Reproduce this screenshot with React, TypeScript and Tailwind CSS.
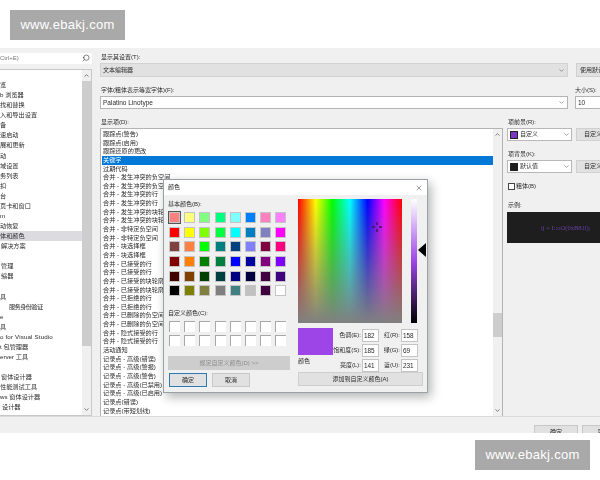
import { ChevronDown, ChevronUp, Search, X } from 'lucide-react'

const cjk = "font-['Liberation_Sans','Noto_Sans_CJK_SC',sans-serif]"

const treeRows = [
  { t: '览', c: '' },
  { t: 'b 浏览器', c: '' },
  { t: '找和替换', c: '' },
  { t: '入和导出设置', c: '' },
  { t: '备', c: '' },
  { t: '速启动', c: '' },
  { t: '展和更新', c: '' },
  { t: '动', c: '' },
  { t: '域设置', c: '' },
  { t: '务列表', c: '' },
  { t: '扣', c: '' },
  { t: '台', c: '' },
  { t: '页卡和窗口', c: '' },
  { t: 'm', c: '' },
  { t: '动恢复', c: '' },
  { t: '体和颜色', c: 'bg-[#dcdce0]' },
  { t: '解决方案', c: 'pl-[1px]' },
  { t: '', c: '' },
  { t: '管理', c: 'pl-[1px]' },
  { t: '缩器', c: 'pl-[1px]' },
  { t: '', c: '' },
  { t: '具', c: '' },
  { t: '服务身份验证', c: 'pl-[9px] tracking-[-0.6px]' },
  { t: 'e', c: '' },
  { t: '具', c: '' },
  { t: 'o for Visual Studio', c: 'tracking-[0.15px]' },
  { t: 't 包管理器', c: '' },
  { t: 'erver 工具', c: '' },
  { t: '', c: '' },
  { t: '窗体设计器', c: 'pl-[1px]' },
  { t: '性能测试工具', c: '' },
  { t: 'ws 窗体设计器', c: '' },
  { t: '设计器', c: 'pl-[2px]' },
]

const itemRows = [
  '跟踪点(警告)',
  '跟踪点(启用)',
  '跟踪还原的更改',
  '关键字',
  '过期代码',
  '合并 - 发生冲突的负空间',
  '合并 - 发生冲突的负空间',
  '合并 - 发生冲突的行',
  '合并 - 发生冲突的行',
  '合并 - 发生冲突的块轮廓',
  '合并 - 发生冲突的块轮廓',
  '合并 - 非特定负空间',
  '合并 - 非特定负空间',
  '合并 - 块选择框',
  '合并 - 块选择框',
  '合并 - 已接受的行',
  '合并 - 已接受的行',
  '合并 - 已接受的块轮廓',
  '合并 - 已接受的块轮廓',
  '合并 - 已拒绝的行',
  '合并 - 已拒绝的行',
  '合并 - 已删除的负空间',
  '合并 - 已删除的负空间',
  '合并 - 隐式接受的行',
  '合并 - 隐式接受的行',
  '活动通知',
  '记录点 - 高级(错误)',
  '记录点 - 高级(警报)',
  '记录点 - 高级(警告)',
  '记录点 - 高级(已禁用)',
  '记录点 - 高级(已启用)',
  '记录点(错误)',
  '记录点(带短划线)',
]

const basicColors = [
  ['#ff8080', '#ffff80', '#80ff80', '#00ff80', '#80ffff', '#0080ff', '#ff80c0', '#ff80ff'],
  ['#ff0000', '#ffff00', '#80ff00', '#00ff40', '#00ffff', '#0080c0', '#8080c0', '#ff00ff'],
  ['#804040', '#ff8040', '#00ff00', '#008080', '#004080', '#8080ff', '#800040', '#ff0080'],
  ['#800000', '#ff8000', '#008000', '#008040', '#0000ff', '#0000a0', '#800080', '#8000ff'],
  ['#400000', '#804000', '#004000', '#004040', '#000080', '#000040', '#400040', '#400080'],
  ['#000000', '#808000', '#808040', '#808080', '#408080', '#c0c0c0', '#400040', '#ffffff'],
]

function Label({ children, className = '' }: { children: string; className?: string }) {
  return <div className={`h-[10px] text-[6px] leading-[10px] text-[#2a2a2a] whitespace-nowrap ${className}`}>{children}</div>
}

function Scrollbar({ thumb }: { thumb: string }) {
  return (
    <div className="w-[9px] shrink-0 flex flex-col bg-[#f0f0f0] text-[#555]">
      <div className="h-[11px] flex items-center justify-center shrink-0">
        <ChevronUp size={7} strokeWidth={2.5} />
      </div>
      <div className="flex-1 flex flex-col">
        <div className={thumb} />
        <div className="flex-1" />
      </div>
      <div className="h-[11px] flex items-center justify-center shrink-0">
        <ChevronDown size={7} strokeWidth={2.5} />
      </div>
    </div>
  )
}

function ColorField({ label, value, labelWidth }: { label: string; value: string; labelWidth: string }) {
  return (
    <div className="flex items-center h-[15px]">
      <div className={`text-[6px] text-right whitespace-nowrap text-[#2a2a2a] ${labelWidth}`}>{label}</div>
      <div className="w-[17px] h-[13px] ml-[1px] bg-white border border-[#c4c4c4] text-[6.4px] leading-[11px] pl-[1px] text-[#2a2a2a]">
        {value}
      </div>
    </div>
  )
}

function SwatchCombo({ swatch, text }: { swatch: string; text: string }) {
  return (
    <div className="flex mt-[1px] gap-[4px]">
      <div className="w-[65px] h-[13px] shrink-0 bg-white border border-[#b8b8b8] flex items-center pl-[2px] pr-[1px]">
        <div className={`w-[8px] h-[8px] border border-[#222] ${swatch}`} />
        <span className="text-[6px] ml-[2px] text-[#2a2a2a]">{text}</span>
        <ChevronDown size={7} className="ml-auto text-[#666]" />
      </div>
      <div className="w-[40px] h-[13px] shrink-0 bg-[#e1e1e1] border border-[#d0d0d0] text-[6px] leading-[11px] pl-[7px] text-[#2a2a2a] whitespace-nowrap">
        自定义
      </div>
    </div>
  )
}

function ColorDialog() {
  return (
    <div className="absolute left-[163px] top-[179px] w-[265px] h-[214px] bg-[#f0f0f0] border border-[#9aa0a6] shadow-[3px_4px_10px_rgba(0,0,0,0.3)] flex flex-col">
      <div className="h-[15px] bg-white flex items-center justify-between pl-[4px] pr-[4px] shrink-0">
        <span className="text-[6px] text-[#2a2a2a]">颜色</span>
        <X size={8} strokeWidth={1.5} className="text-[#333]" />
      </div>
      <div className="flex gap-[6px] pl-[4px] pt-[4px]">
        {/* Left: basic and custom colours */}
        <div className="w-[124px] shrink-0 flex flex-col">
          <Label>基本颜色(B):</Label>
          <div className="grid grid-cols-[repeat(8,11px)] gap-x-[4.2px] gap-y-[3.7px] pl-[1px] mt-[3px]">
            {basicColors.flat().map((color, i) => (
              <div
                key={i}
                className={`w-[11px] h-[11px] border border-[#c4c4c4] ${i === 0 ? 'outline outline-1 outline-[#555]' : ''}`}
                style={{ background: color }}
              />
            ))}
          </div>
          <Label className="mt-[12px]">自定义颜色(C):</Label>
          <div className="grid grid-cols-[repeat(8,11px)] gap-x-[4.2px] gap-y-[3px] pl-[1px] mt-[3px]">
            {Array.from({ length: 16 }).map((_, i) => (
              <div key={i} className="w-[11px] h-[11px] bg-white border-l border-t border-[#a8a8a8]" />
            ))}
          </div>
          <div className="w-[122px] h-[14px] mt-[10px] bg-[#cdcdcd] text-[6px] leading-[14px] text-center text-[#8e8e8e]">
            规定自定义颜色(D) &gt;&gt;
          </div>
          <div className="flex gap-[5px] mt-[3px] pl-[1px]">
            <div className="w-[38px] h-[14px] bg-[#e1e1e1] border border-[#2f79b5] text-[6px] leading-[12px] text-center text-[#2a2a2a]">
              确定
            </div>
            <div className="w-[38px] h-[14px] bg-[#e1e1e1] border border-[#c8c8c8] text-[6px] leading-[12px] text-center text-[#2a2a2a]">
              取消
            </div>
          </div>
        </div>

        {/* Right: spectrum and values */}
        <div className="flex-1 flex flex-col">
          <div className="flex">
            <div className="relative w-[104px] h-[124px] bg-[linear-gradient(to_bottom,rgba(128,128,128,0),#808080),linear-gradient(to_right,#ff0000,#ffff00_17%,#00ff00_33%,#00ffff_50%,#0000ff_67%,#ff00ff_83%,#ff0000)]">
              <svg className="absolute left-[74px] top-[23px]" width="10" height="10" viewBox="0 0 10 10">
                <path d="M5 0v3M5 7v3M0 5h3M7 5h3" stroke="#3b1a55" strokeWidth="1.4" />
              </svg>
            </div>
            <div className="relative ml-[9px] w-[6px] h-[124px] bg-[linear-gradient(to_bottom,#ffffff,#9e45e7_50%,#000000)]">
              <svg className="absolute left-[7px] top-[44px]" width="8" height="14" viewBox="0 0 8 14">
                <path d="M0 7 8 0v14z" fill="#000" />
              </svg>
            </div>
          </div>
          <div className="flex mt-[5px]">
            <div className="w-[35px] shrink-0">
              <div className="h-[27px] bg-[#9e45e7]" />
              <div className="text-[6px] mt-[2px] text-[#2a2a2a]">颜色</div>
            </div>
            <div className="flex flex-col">
              <ColorField label="色调(E):" value="182" labelWidth="w-[28px]" />
              <ColorField label="饱和度(S):" value="185" labelWidth="w-[28px]" />
              <ColorField label="亮度(L):" value="141" labelWidth="w-[28px]" />
            </div>
            <div className="flex flex-col ml-[1px]">
              <ColorField label="红(R):" value="158" labelWidth="w-[20px]" />
              <ColorField label="绿(G):" value="69" labelWidth="w-[20px]" />
              <ColorField label="蓝(U):" value="231" labelWidth="w-[20px]" />
            </div>
          </div>
          <div className="w-[125px] h-[14px] mt-[-1px] bg-[#e1e1e1] border border-[#cfcfcf] text-[6px] leading-[12px] text-center text-[#2a2a2a]">
            添加到自定义颜色(A)
          </div>
        </div>
      </div>
    </div>
  )
}

export default function App() {
  return (
    <div className={`relative w-[600px] h-[480px] overflow-hidden bg-white ${cjk}`}>
      <div className="blur-[0.3px]">
        <div className="h-[48px]" />
        <div className="h-[385px] overflow-hidden bg-[#f0f0f0]">
          <div className="flex h-[369px] border-b border-[#dcdcdc]">
            {/* Left: options tree */}
            <div className="w-[92px] shrink-0 pt-[5px] flex flex-col">
              <div className="h-[11px] bg-white flex items-center justify-between pr-[2px]">
                <span className="text-[6px] text-[#777] whitespace-nowrap">Ctrl+E)</span>
                <Search size={8} className="text-[#444] -scale-x-100" />
              </div>
              <div className="mt-[5px] h-[348px] bg-white border-r border-b border-t border-[#c8c8c8] flex">
                <div className="flex-1 min-w-0 overflow-hidden pt-[10px]">
                  {treeRows.map((row, i) => (
                    <div key={i} className={`h-[10.08px] text-[6.2px] leading-[10px] text-[#2a2a2a] whitespace-nowrap ${row.c}`}>
                      {row.t}
                    </div>
                  ))}
                </div>
                <Scrollbar thumb="h-[265px] bg-[#cdcdcd]" />
              </div>
            </div>

            {/* Right: settings, items and colours */}
            <div className="w-[500px] shrink-0 ml-[8px] pt-[4px] flex flex-col">
              <div className="flex gap-[8px] shrink-0">
                <div className="w-[468px] shrink-0">
                  <Label className="pl-[1px]">显示其设置(T):</Label>
                  <div className="mt-[1px] h-[14px] bg-[#e1e1e1] border border-[#d2d2d2] flex items-center justify-between pl-[2px] pr-[2px]">
                    <span className="text-[6px] text-[#2a2a2a]">文本编辑器</span>
                    <ChevronDown size={7} className="text-[#666]" />
                  </div>
                </div>
                <div className="w-[30px] shrink-0 pt-[11px]">
                  <div className="h-[14px] bg-[#e1e1e1] border border-[#d0d0d0] text-[6px] leading-[12px] pl-[3px] text-[#2a2a2a] whitespace-nowrap overflow-hidden">
                    使用默认
                  </div>
                </div>
              </div>

              <div className="flex gap-[7px] mt-[8px] shrink-0">
                <div className="w-[468px] shrink-0">
                  <Label className="pl-[1px]">字体(粗体表示等宽字体)(F):</Label>
                  <div className="mt-[1px] h-[13px] bg-white border border-[#b4b4b4] flex items-center justify-between pl-[2px] pr-[2px]">
                    <span className="text-[6.5px] text-[#2a2a2a]">Palatino Linotype</span>
                    <ChevronDown size={7} className="text-[#666]" />
                  </div>
                </div>
                <div className="w-[30px] shrink-0">
                  <Label>大小(S):</Label>
                  <div className="mt-[1px] h-[13px] bg-white border border-[#b4b4b4] text-[6.5px] leading-[11px] pl-[2px] text-[#2a2a2a]">
                    10
                  </div>
                </div>
              </div>

              <div className="flex mt-[8px] flex-1 min-h-0">
                <div className="w-[403px] shrink-0 flex flex-col">
                  <Label className="pl-[1px]">显示项(D):</Label>
                  <div className="mt-[1px] flex-1 min-h-0 bg-white border-l border-t border-r border-[#b4b4b4] flex">
                    <div className="flex-1 min-w-0 overflow-hidden pt-[1px] pl-[1px]">
                      {itemRows.map((row, i) => (
                        <div
                          key={i}
                          className={`h-[8.65px] text-[6.2px] leading-[8.65px] whitespace-nowrap pl-[1px] ${i === 3 ? 'bg-[#0078d7] text-white' : 'text-[#2a2a2a]'}`}
                        >
                          {row}
                        </div>
                      ))}
                    </div>
                    <Scrollbar thumb="mt-[173px] h-[24px] bg-[#cdcdcd]" />
                  </div>
                </div>

                <div className="w-[109px] shrink-0 ml-[4px] flex flex-col">
                  <Label className="pl-[1px]">项前景(R):</Label>
                  <SwatchCombo swatch="bg-[#7b35c4]" text="自定义" />
                  <Label className="mt-[8px] pl-[1px]">项背景(K):</Label>
                  <SwatchCombo swatch="bg-[#1e1e1e]" text="默认值" />
                  <div className="flex items-center h-[10px] mt-[8px] pl-[1px]">
                    <div className="w-[7px] h-[7px] bg-white border border-[#444]" />
                    <span className="text-[6px] ml-[1px] text-[#2a2a2a]">粗体(B)</span>
                  </div>
                  <Label className="mt-[9px] pl-[1px]">示例:</Label>
                  <div className="mt-[2px] h-[31px] bg-[#1e1e1e] flex items-center pl-[34px] text-[6.5px] text-[#6a3ea8] whitespace-nowrap font-['Liberation_Serif',serif]">
                    ij = I::oO(0xB81l);
                  </div>
                </div>
              </div>
            </div>
          </div>

          {/* Bottom: dialog buttons */}
          <div className="flex gap-[4px] pl-[534px] pt-[8px]">
            <div className="w-[44px] h-[14px] shrink-0 bg-[#e1e1e1] border border-[#c8c8c8] text-[6px] leading-[12px] text-center text-[#2a2a2a]">
              确定
            </div>
            <div className="w-[44px] h-[14px] shrink-0 bg-[#e1e1e1] border border-[#c8c8c8] text-[6px] leading-[12px] text-center text-[#2a2a2a]">
              取消
            </div>
          </div>
        </div>

        <ColorDialog />
      </div>

      {/* Watermarks */}
      <div className="absolute left-[10px] top-[10px] w-[115px] h-[30px] bg-[#a9a9a9] flex items-center justify-center text-[13px] font-medium tracking-[0.3px] text-white font-['Liberation_Sans',sans-serif]">
        www.ebakj.com
      </div>
      <div className="absolute left-[475px] top-[440px] w-[115px] h-[30px] bg-[#a9a9a9] flex items-center justify-center text-[13px] font-medium tracking-[0.3px] text-white font-['Liberation_Sans',sans-serif]">
        www.ebakj.com
      </div>
    </div>
  )
}
